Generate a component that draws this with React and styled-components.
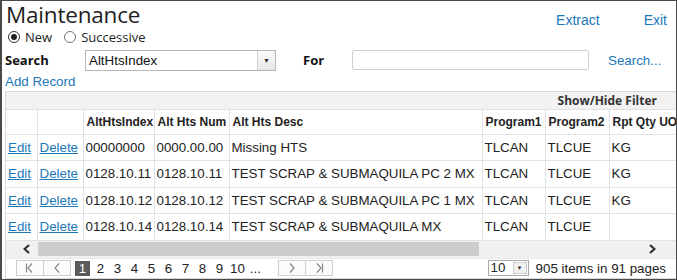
import React from 'react'
import styled, { createGlobalStyle } from 'styled-components'

const GlobalStyle = createGlobalStyle`
  html, body {
    margin: 0;
    padding: 0;
    background: #fff;
  }
  body {
    font-family: 'Liberation Sans', Arial, sans-serif;
    color: #222;
  }
`

const rows = [
  ['00000000', '0000.00.00', 'Missing HTS', 'TLCAN', 'TLCUE', 'KG'],
  ['0128.10.11', '0128.10.11', 'TEST SCRAP & SUBMAQUILA PC 2 MX', 'TLCAN', 'TLCUE', 'KG'],
  ['0128.10.12', '0128.10.12', 'TEST SCRAP & SUBMAQUILA PC 1 MX', 'TLCAN', 'TLCUE', 'KG'],
  ['0128.10.14', '0128.10.14', 'TEST SCRAP & SUBMAQUILA MX', 'TLCAN', 'TLCUE', '']
]

const columns = [
  { label: '', width: 31 },
  { label: '', width: 46 },
  { label: 'AltHtsIndex', width: 71 },
  { label: 'Alt Hts Num', width: 75 },
  { label: 'Alt Hts Desc', width: 253 },
  { label: 'Program1', width: 63 },
  { label: 'Program2', width: 64 },
  { label: 'Rpt Qty UOM', width: 90 }
]

const pages = ['2', '3', '4', '5', '6', '7', '8', '9', '10']

const Page = styled.div`
  width: 677px;
  height: 280px;
  box-sizing: border-box;
  border: 1px solid #4a4a4a;
  border-left-width: 2px;
  overflow: hidden;
  display: flex;
  flex-direction: column;
`

const TitleBar = styled.div`
  display: flex;
  align-items: flex-end;
  justify-content: space-between;
  height: 27px;
  padding: 0 9px 0 4px;
`

const Title = styled.h1`
  margin: 0;
  font-family: 'Open Sans', sans-serif;
  font-weight: 400;
  font-size: 22.5px;
  line-height: 26px;
  color: #1e1e1e;
  letter-spacing: -0.2px;
`

const TopLinks = styled.div`
  display: flex;
  gap: 44px;
`

const Link = styled.a`
  font-family: 'Liberation Sans', Arial, sans-serif;
  font-size: ${p => p.size || 13.33}px;
  color: #1b78b9;
  text-decoration: ${p => (p.underline ? 'underline' : 'none')};
  cursor: pointer;
`

const RadioRow = styled.div`
  display: flex;
  align-items: center;
  height: 18px;
  padding-left: 6px;
  gap: 12px;
`

const RadioLabel = styled.label`
  display: flex;
  align-items: center;
  gap: 5px;
  font-family: 'Open Sans', sans-serif;
  font-size: 13px;
  line-height: 15px;
  color: #222;
`

const RadioCircle = styled.span`
  width: 10px;
  height: 10px;
  border-radius: 50%;
  border: 1px solid ${p => (p.checked ? '#333' : '#777')};
  background: #fff;
  display: flex;
  align-items: center;
  justify-content: center;
  &::after {
    content: '';
    width: 6px;
    height: 6px;
    border-radius: 50%;
    background: ${p => (p.checked ? '#222' : 'transparent')};
  }
`

const SearchRow = styled.div`
  display: flex;
  align-items: center;
  height: 24px;
  padding-left: 3px;
  margin-top: 2px;
`

const FieldLabel = styled.span`
  font-family: 'Open Sans', sans-serif;
  font-weight: 700;
  font-size: 13px;
  color: #111;
  width: ${p => p.width}px;
  margin-left: ${p => p.offset || 0}px;
`

const SelectBox = styled.div`
  width: 189px;
  height: 19px;
  border: 1px solid #b5b5b5;
  display: flex;
  align-items: stretch;
`

const SelectText = styled.span`
  flex: 1;
  font-size: 13.33px;
  line-height: 19px;
  padding-left: 3px;
  color: #111;
`

const SelectArrow = styled.span`
  width: 17px;
  border-left: 1px solid #ccc;
  background: linear-gradient(#fafafa, #e8e8e8);
  font-size: 7px;
  color: #333;
  display: flex;
  align-items: center;
  justify-content: center;
`

const TextInput = styled.div`
  width: 235px;
  height: 18px;
  border: 1px solid #d0d0d0;
  border-radius: 2px;
  margin-right: 19px;
`

const AddRow = styled.div`
  height: 18px;
  display: flex;
  align-items: center;
  padding-left: 3px;
`

const Grid = styled.div`
  margin-left: 3px;
  margin-top: 1px;
  border: 1px solid #d8d8d8;
  border-right: none;
  flex: 1;
  display: flex;
  flex-direction: column;
  overflow: hidden;
`

const GridToolbar = styled.div`
  height: 18px;
  background: #f2f2f2;
  display: flex;
  align-items: flex-end;
  justify-content: flex-end;
  padding-right: 19px;
  border-bottom: 1px solid #e2e2e2;
`

const ToolbarLabel = styled.span`
  font-family: 'Open Sans', sans-serif;
  font-weight: 700;
  font-size: 12px;
  line-height: 16px;
  color: #333;
`

const Table = styled.table`
  border-collapse: collapse;
  table-layout: fixed;
  width: 693px;
`

const HeadCell = styled.th`
  width: ${p => p.width}px;
  height: 24px;
  padding: 0 3px;
  text-align: left;
  font-size: 12px;
  font-weight: 700;
  color: #222;
  white-space: nowrap;
  overflow: hidden;
  border-right: 1px solid #e2e2e2;
  border-bottom: 1px solid #e2e2e2;
  box-sizing: border-box;
`

const Cell = styled.td`
  height: 25.5px;
  padding: 0 2px;
  font-size: 13.33px;
  color: #222;
  white-space: nowrap;
  overflow: hidden;
  border-right: 1px solid #e2e2e2;
  border-bottom: 1px solid #e2e2e2;
`

const ScrollBar = styled.div`
  height: 18px;
  background: #f0f0f0;
  display: flex;
  align-items: center;
  padding: 0 19px 0 16px;
  gap: 7px;
`

const Track = styled.div`
  flex: 1;
  height: 14px;
  display: flex;
`

const Thumb = styled.div`
  width: 441px;
  background: #cdcdcd;
`

const Pager = styled.div`
  height: 20px;
  display: flex;
  align-items: center;
  padding-left: 11px;
  border-top: 1px solid #e8e8e8;
`

const PagerButton = styled.span`
  width: 26px;
  height: 14px;
  border: 1px solid #cfcfcf;
  margin-left: -1px;
  background: #fbfbfb;
  display: flex;
  align-items: center;
  justify-content: center;
`

const PageNums = styled.div`
  display: flex;
  align-items: center;
  margin: 0 13px 0 4px;
`

const PageNum = styled.span`
  font-size: 13.33px;
  color: ${p => (p.active ? '#fff' : '#222')};
  background: ${p => (p.active ? '#5b5b5b' : 'transparent')};
  min-width: ${p => (p.active ? 15 : 13)}px;
  height: 15px;
  line-height: 15px;
  text-align: center;
  margin-right: 4px;
`

const PagerRight = styled.div`
  margin-left: auto;
  display: flex;
  align-items: center;
  gap: 7px;
  padding-right: 10px;
`

const SizeSelect = styled.div`
  width: 39px;
  height: 14px;
  border: 1px solid #aaa;
  display: flex;
`

const SizeText = styled.span`
  flex: 1;
  font-size: 13.33px;
  line-height: 14px;
  padding-left: 2px;
`

const SizeArrow = styled.span`
  width: 12px;
  margin: 1px;
  border: 1px solid #ccc;
  background: #f2f2f2;
  font-size: 6px;
  display: flex;
  align-items: center;
  justify-content: center;
  color: #333;
`

const Info = styled.span`
  font-size: 13.33px;
  color: #222;
`

const Chevron = ({ dir, bar }) => (
  <svg width='12' height='12' viewBox='0 0 12 12'>
    {bar && (
      <line
        x1={dir === 'left' ? 2.5 : 9.5}
        y1='1.5'
        x2={dir === 'left' ? 2.5 : 9.5}
        y2='10.5'
        stroke='#888'
        strokeWidth='1.2'
      />
    )}
    <polyline
      points={dir === 'left' ? '8,1.5 4,6 8,10.5' : '4,1.5 8,6 4,10.5'}
      fill='none'
      stroke='#888'
      strokeWidth='1.2'
    />
  </svg>
)

const ScrollArrow = ({ dir }) => (
  <svg width='9' height='10' viewBox='0 0 9 10'>
    <polyline
      points={dir === 'left' ? '7,1 2.5,5 7,9' : '2,1 6.5,5 2,9'}
      fill='none'
      stroke='#2a2a2a'
      strokeWidth='2'
    />
  </svg>
)

const Radio = ({ checked, label }) => (
  <RadioLabel>
    <RadioCircle checked={checked} />
    {label}
  </RadioLabel>
)

export default function App() {
  return (
    <Page>
      <GlobalStyle />
      <TitleBar>
        <Title>Maintenance</Title>
        <TopLinks>
          <Link size={14}>Extract</Link>
          <Link size={14}>Exit</Link>
        </TopLinks>
      </TitleBar>
      <RadioRow>
        <Radio checked label='New' />
        <Radio label='Successive' />
      </RadioRow>
      <SearchRow>
        <FieldLabel width={80}>Search</FieldLabel>
        <SelectBox>
          <SelectText>AltHtsIndex</SelectText>
          <SelectArrow>▼</SelectArrow>
        </SelectBox>
        <FieldLabel width={49} offset={27}>For</FieldLabel>
        <TextInput />
        <Link>Search...</Link>
      </SearchRow>
      <AddRow>
        <Link>Add Record</Link>
      </AddRow>
      <Grid>
        <GridToolbar>
          <ToolbarLabel>Show/Hide Filter</ToolbarLabel>
        </GridToolbar>
        <Table>
          <thead>
            <tr>
              {columns.map((c, i) => (
                <HeadCell key={i} width={c.width}>{c.label}</HeadCell>
              ))}
            </tr>
          </thead>
          <tbody>
            {rows.map((r, i) => (
              <tr key={i}>
                <Cell><Link underline>Edit</Link></Cell>
                <Cell><Link underline>Delete</Link></Cell>
                {r.map((v, j) => (
                  <Cell key={j}>{v}</Cell>
                ))}
              </tr>
            ))}
          </tbody>
        </Table>
        <ScrollBar>
          <ScrollArrow dir='left' />
          <Track>
            <Thumb />
          </Track>
          <ScrollArrow dir='right' />
        </ScrollBar>
        <Pager>
          <PagerButton><Chevron dir='left' bar /></PagerButton>
          <PagerButton><Chevron dir='left' /></PagerButton>
          <PageNums>
            <PageNum active>1</PageNum>
            {pages.map(p => (
              <PageNum key={p}>{p}</PageNum>
            ))}
            <PageNum>...</PageNum>
          </PageNums>
          <PagerButton><Chevron dir='right' /></PagerButton>
          <PagerButton><Chevron dir='right' bar /></PagerButton>
          <PagerRight>
            <SizeSelect>
              <SizeText>10</SizeText>
              <SizeArrow>▼</SizeArrow>
            </SizeSelect>
            <Info>905 items in 91 pages</Info>
          </PagerRight>
        </Pager>
      </Grid>
    </Page>
  )
}
